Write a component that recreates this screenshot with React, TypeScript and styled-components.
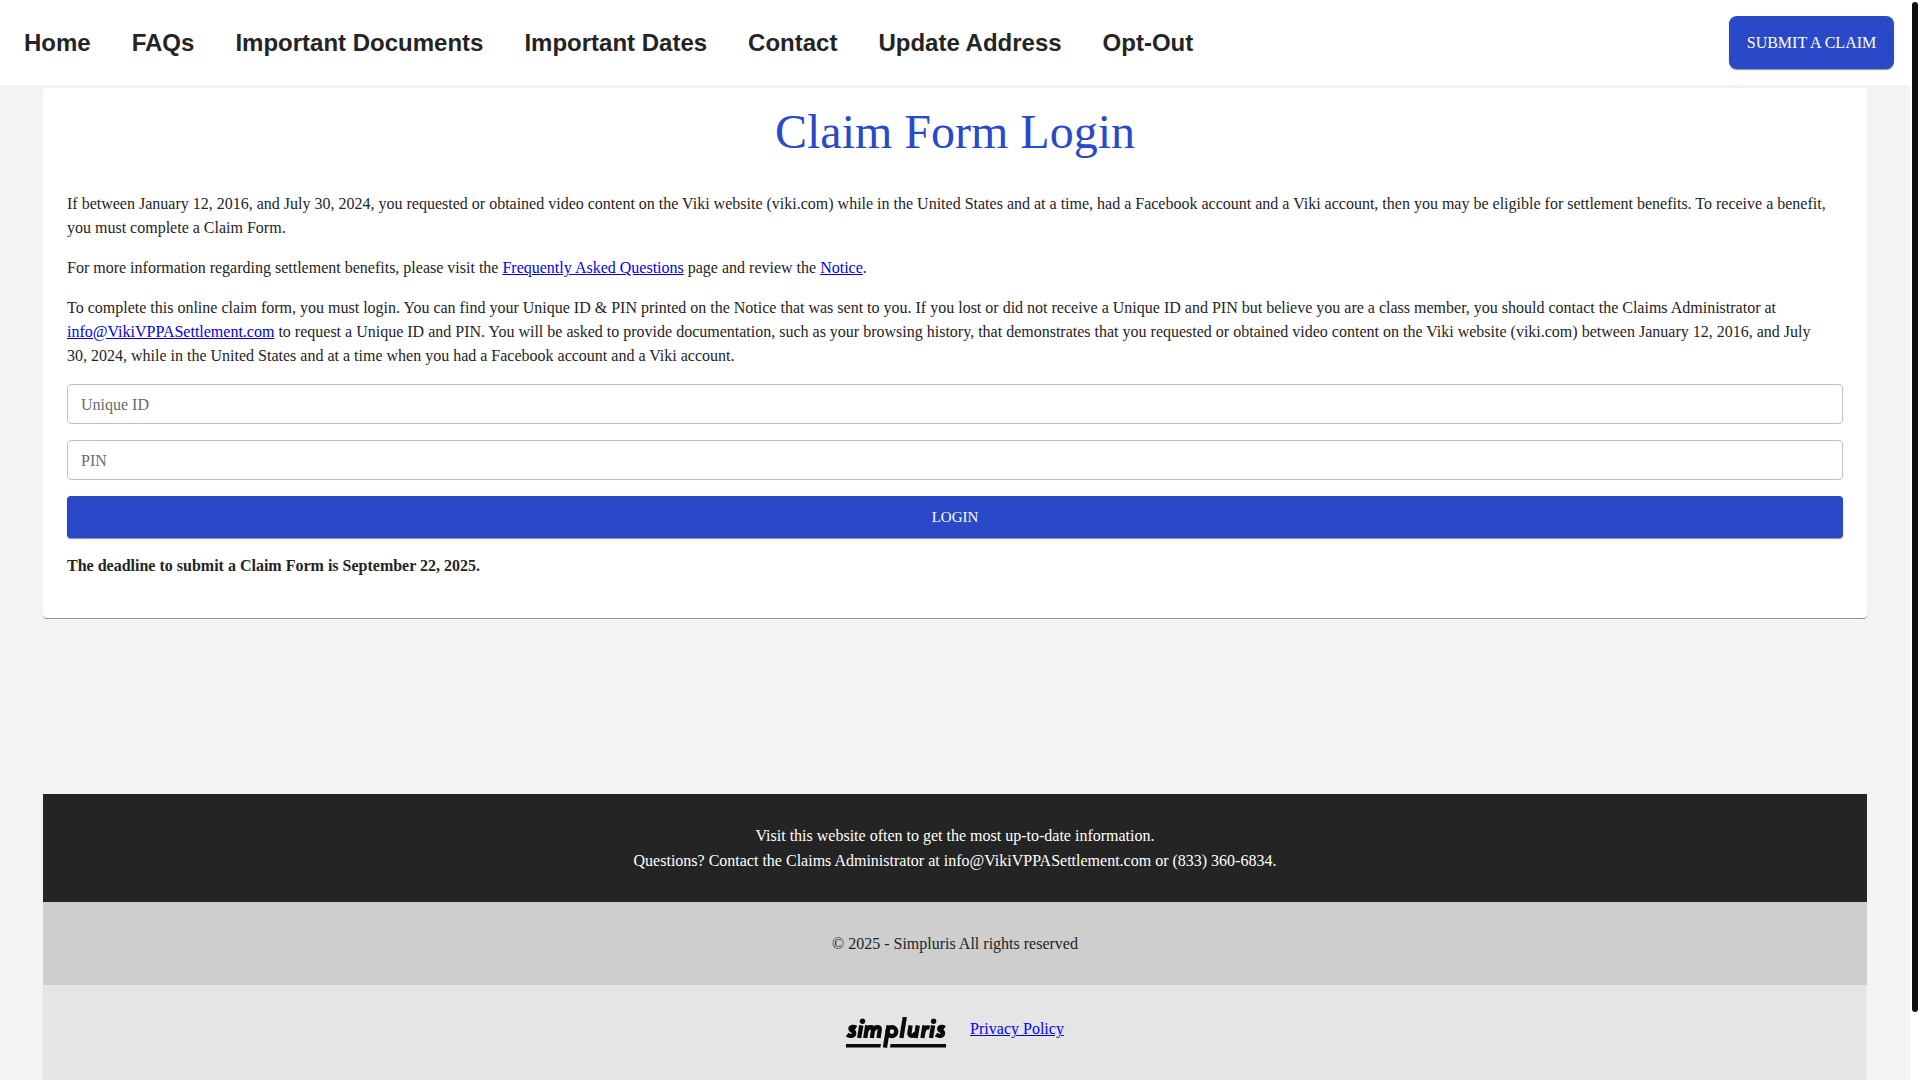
import React, { useEffect, useRef, useState } from 'react';
import styled, { createGlobalStyle } from 'styled-components';

const SERIF = "'Liberation Serif', 'Times New Roman', serif";
const SANS = "'Liberation Sans', Arial, sans-serif";
const BLUE = '#2a49c9';
const INK = '#242424';

const GlobalStyle = createGlobalStyle`
  *, *::before, *::after { box-sizing: border-box; }
  body { margin: 0; background: #ffffff; color: ${INK}; font: 16px/24px ${SERIF}; }
`;

const Shell = styled.div`
  display: grid;
  grid-template-columns: minmax(0, 1fr) 10px;
  height: 100vh;
`;

const Page = styled.div`
  overflow-y: auto;
  scrollbar-width: none;
  background: #f3f3f3;
`;

const ScrollRail = styled.div`
  padding: 2px;
  background: #ffffff;
`;

const ScrollThumb = styled.div`
  border-radius: 3px;
  background: #0f0f0f;
`;

const Header = styled.header`
  display: flex;
  align-items: center;
  justify-content: space-between;
  padding: 16px 16px 16px 24px;
  background: #ffffff;
`;

const Nav = styled.nav`
  display: flex;
  flex-wrap: wrap;
  gap: 8px 41px;
`;

const NavLink = styled.a`
  color: ${INK};
  font: bold 24px/32px ${SANS};
  text-decoration: none;
`;

const Button = styled.button<{ $size: 'nav' | 'wide' }>`
  border: 0;
  background: ${BLUE};
  color: #ffffff;
  font-family: ${SERIF};
  line-height: 21px;
  text-transform: uppercase;
  box-shadow: 0 1px 1px rgba(0, 0, 0, 0.45);
  cursor: pointer;
  ${({ $size }) =>
    $size === 'nav'
      ? 'min-width: 165px; padding: 16px; border-radius: 8px; font-size: 16px;'
      : 'width: 100%; height: 42px; border-radius: 4px; font-size: 15px;'}
`;

const Body = styled.div`
  padding: 3px 43px 0;
`;

const Card = styled.main`
  margin-bottom: 176px;
  padding: 16px 24px 24px;
  border-radius: 4px;
  background: #ffffff;
  box-shadow: 0 1px 0 #939393;
`;

const Title = styled.h1`
  margin: 0 0 32px;
  color: ${BLUE};
  font-size: 48px;
  font-weight: 400;
  line-height: 56px;
  text-align: center;
`;

const Paragraph = styled.p`
  margin: 0 0 16px;
  padding-right: 12px;
`;

const TextLink = styled.a`
  color: #0000ee;
  text-decoration: underline;
`;

const Form = styled.form`
  display: grid;
  gap: 16px;
  margin-bottom: 16px;
`;

const Field = styled.input`
  width: 100%;
  height: 40px;
  padding: 2px 13px 0;
  border: 1px solid #c0c0c0;
  border-radius: 4px;
  background: #ffffff;
  color: ${INK};
  font: 16px/24px ${SERIF};

  &::placeholder {
    color: #6b6b6b;
    opacity: 1;
  }
`;

const Deadline = styled.p`
  margin: 0 0 16px;
  font-weight: 700;
`;

const Band = styled.div<{ $bg: string; $ink?: string }>`
  padding: 29px 24px;
  background: ${({ $bg }) => $bg};
  color: ${({ $ink }) => $ink ?? INK};
  line-height: 25px;
  text-align: center;
`;

const LegalBand = styled.div`
  display: flex;
  align-items: flex-start;
  justify-content: center;
  gap: 24px;
  min-height: 166px;
  padding: 32px 24px;
  background: #e5e5e5;
`;

const Logo = styled.svg`
  display: block;
  width: 100px;
  height: 31px;
`;

const navItems = [
  'Home',
  'FAQs',
  'Important Documents',
  'Important Dates',
  'Contact',
  'Update Address',
  'Opt-Out',
];

function SimplurisLogo() {
  return (
    <Logo viewBox="0 0 100 31" role="img" aria-label="simpluris">
      <g fill="none" stroke="#0a0a0a" strokeWidth="4.3">
        <path d="M10.200 10.800C8 9.400 4.600 9.500 4.400 11.700C4.200 14.200 8.500 13.400 8.200 16.400C7.800 19.400 3.800 19.500 1.200 17.600" />
        <path d="M15.300 8.300L13.200 21" />
        <path d="M21.300 8.300L19.200 21M20.700 13.500C22 9.800 27.600 8.500 27.100 12.500L25.800 21M27.200 13.500C28.500 9.800 34.300 8.500 33.800 12.500L32.500 21" />
        <path d="M42.600 8.300L38.900 30.600" />
        <ellipse cx="45.900" cy="14.600" rx="4.400" ry="4.500" />
        <path d="M58.800 0L55.400 21" />
        <path d="M64.600 8.300L63.400 16C62.900 20 68.800 19.500 69.700 15.500M71.800 8.300L69.700 21" />
        <path d="M78.500 8.300L76.400 21M77.800 14C78.500 10.800 80.800 9.700 83.600 10.700" />
        <path d="M87.100 8.300L85 21" />
        <path d="M98.700 10.800C96.500 9.400 93.400 9.500 93.200 11.700C93 14.200 97.300 13.400 97 16.400C96.600 19.400 92.600 19.500 90 17.600" />
      </g>
      <g fill="#0a0a0a">
        <circle cx="16.500" cy="4.200" r="2.700" />
        <circle cx="87.600" cy="4.200" r="2.700" />
        <path d="M0 27H35L34.400 30.500H0ZM44.600 27H100V30.500H44Z" />
      </g>
    </Logo>
  );
}

export default function App() {
  const pageRef = useRef<HTMLDivElement>(null);
  const [thumb, setThumb] = useState({ height: 0, top: 0 });

  useEffect(() => {
    const page = pageRef.current;
    if (!page) return undefined;
    const update = () => {
      const track = page.clientHeight - 4;
      setThumb({
        height: Math.round((track * page.clientHeight) / page.scrollHeight),
        top: Math.round((track * page.scrollTop) / page.scrollHeight),
      });
    };
    update();
    page.addEventListener('scroll', update);
    window.addEventListener('resize', update);
    return () => {
      page.removeEventListener('scroll', update);
      window.removeEventListener('resize', update);
    };
  }, []);

  return (
    <>
      <GlobalStyle />
      <Shell>
        <Page ref={pageRef}>
          <Header>
            <Nav aria-label="Main">
              {navItems.map((item) => (
                <NavLink key={item} href="#">
                  {item}
                </NavLink>
              ))}
            </Nav>
            <Button type="button" $size="nav">
              Submit a Claim
            </Button>
          </Header>
          <Body>
            <Card>
              <Title>Claim Form Login</Title>
              <Paragraph>
                If between January 12, 2016, and July 30, 2024, you requested or obtained video
                content on the Viki website (viki.com) while in the United States and at a time,
                had a Facebook account and a Viki account, then you may be eligible for settlement
                benefits. To receive a benefit, you must complete a Claim Form.
              </Paragraph>
              <Paragraph>
                For more information regarding settlement benefits, please visit the{' '}
                <TextLink href="#">Frequently Asked Questions</TextLink> page and review the{' '}
                <TextLink href="#">Notice</TextLink>.
              </Paragraph>
              <Paragraph>
                To complete this online claim form, you must login. You can find your Unique ID
                &amp; PIN printed on the Notice that was sent to you. If you lost or did not
                receive a Unique ID and PIN but believe you are a class member, you should contact
                the Claims Administrator at{' '}
                <TextLink href="#">info@VikiVPPASettlement.com</TextLink> to request a Unique ID
                and PIN. You will be asked to provide documentation, such as your browsing
                history, that demonstrates that you requested or obtained video content on the
                Viki website (viki.com) between January 12, 2016, and July 30, 2024, while in the
                United States and at a time when you had a Facebook account and a Viki account.
              </Paragraph>
              <Form onSubmit={(event) => event.preventDefault()}>
                <Field type="text" placeholder="Unique ID" aria-label="Unique ID" />
                <Field type="text" placeholder="PIN" aria-label="PIN" />
                <Button type="submit" $size="wide">
                  Login
                </Button>
              </Form>
              <Deadline>The deadline to submit a Claim Form is September 22, 2025.</Deadline>
            </Card>
            <footer>
              <Band $bg="#242424" $ink="#ffffff">
                Visit this website often to get the most up-to-date information.
                <br />
                Questions? Contact the Claims Administrator at info@VikiVPPASettlement.com or
                (833) 360-6834.
              </Band>
              <Band $bg="#cecece">© 2025 - Simpluris All rights reserved</Band>
              <LegalBand>
                <SimplurisLogo />
                <TextLink href="#">Privacy Policy</TextLink>
              </LegalBand>
            </footer>
          </Body>
        </Page>
        <ScrollRail>
          <ScrollThumb style={{ height: thumb.height, marginTop: thumb.top }} />
        </ScrollRail>
      </Shell>
    </>
  );
}
